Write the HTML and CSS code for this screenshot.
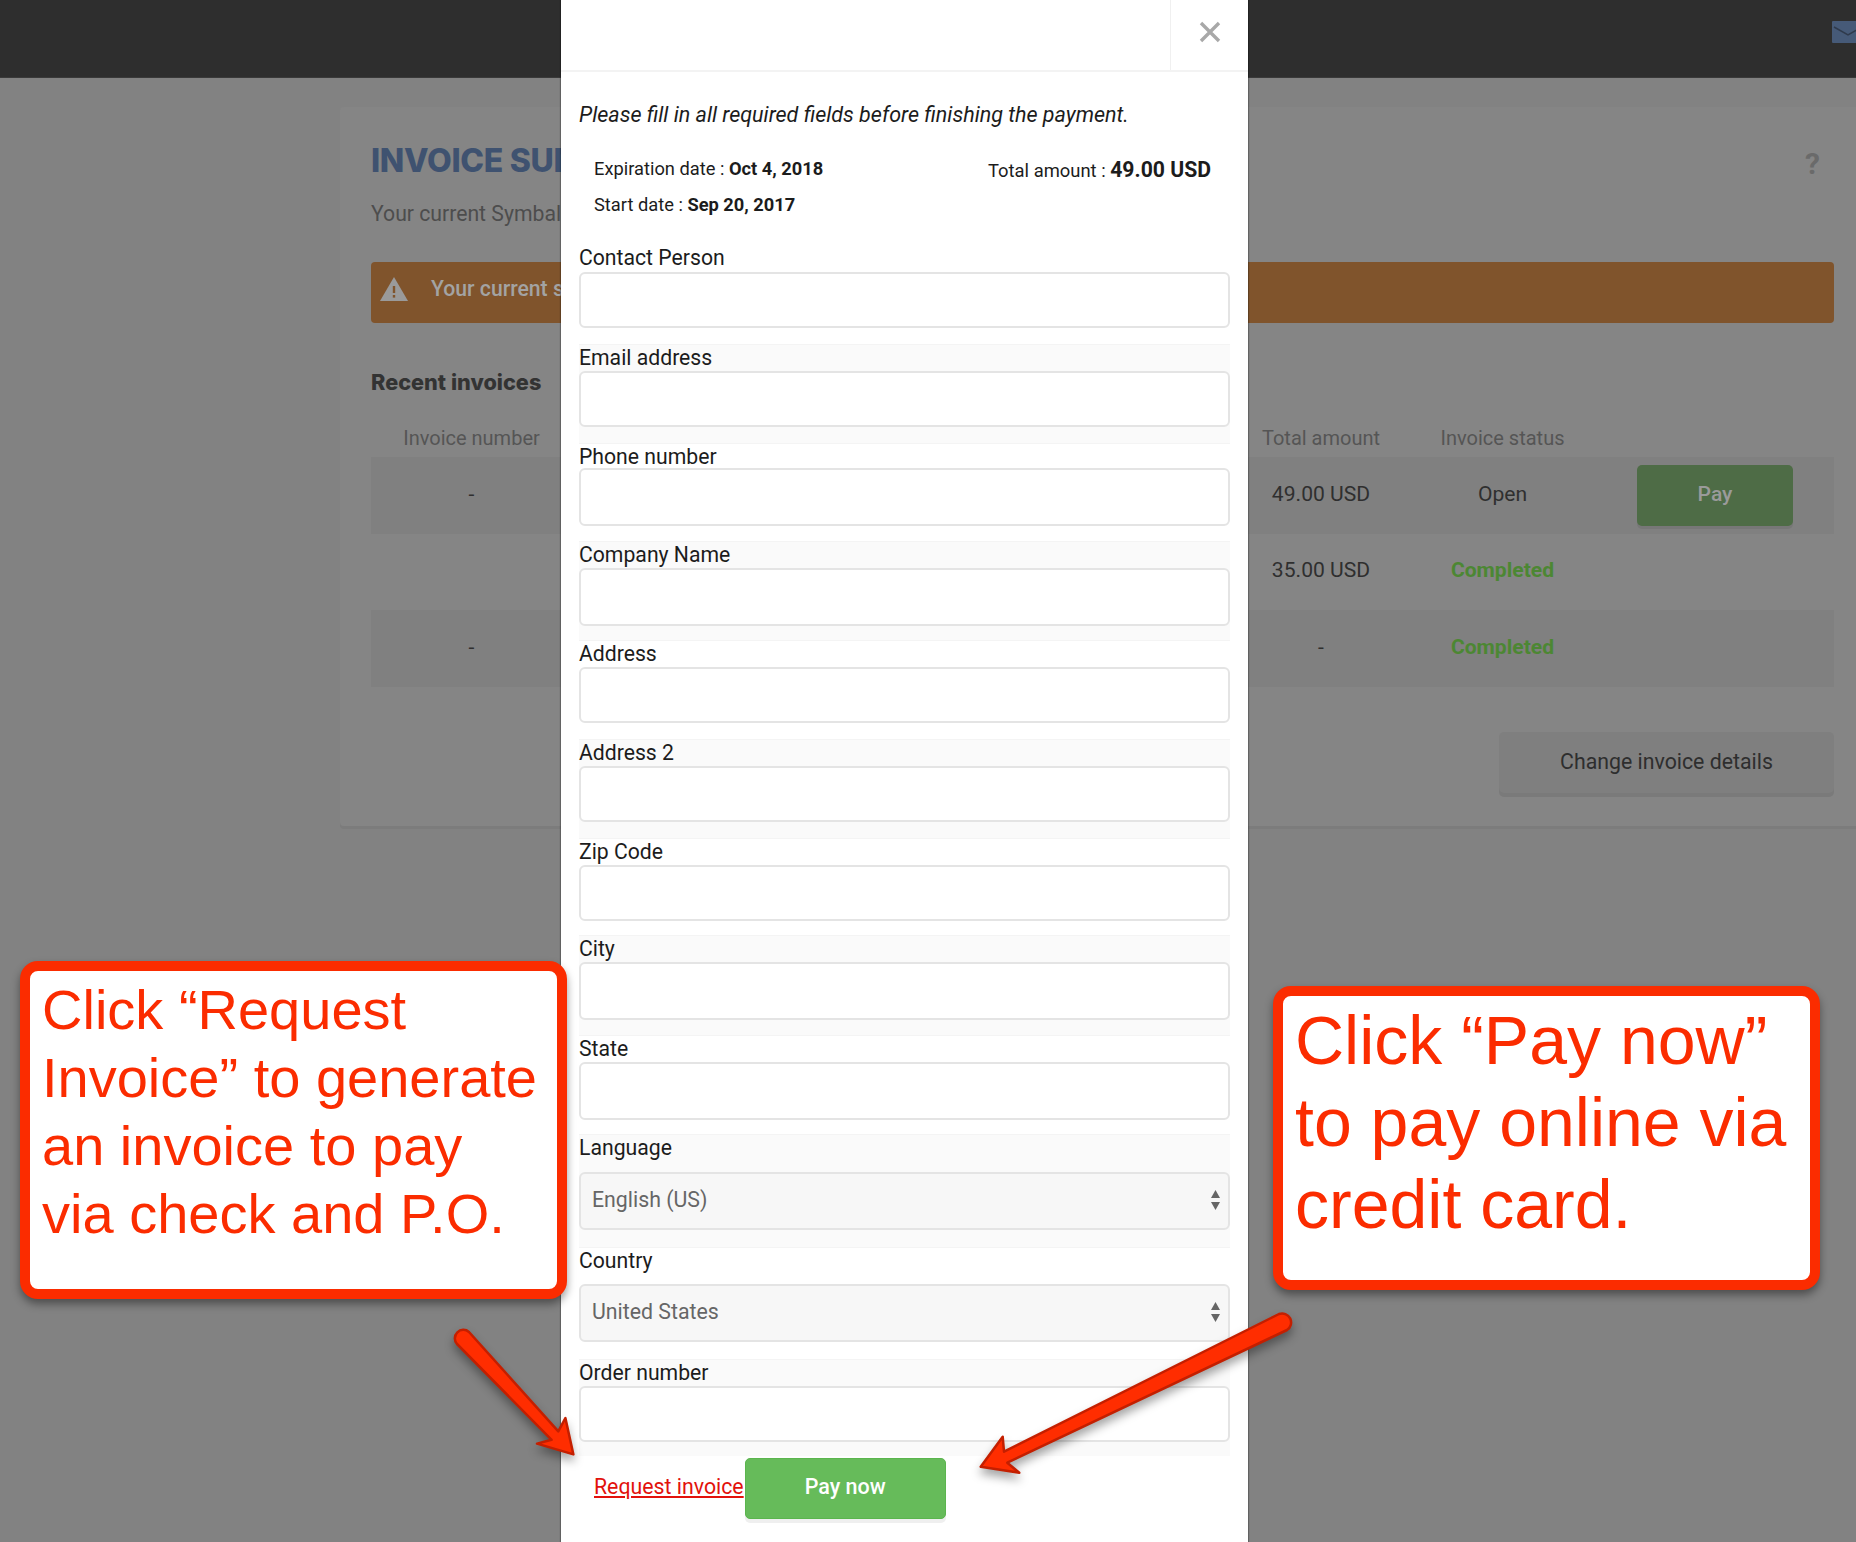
FILE: index.html
```html
<!DOCTYPE html>
<html lang="en">
<head>
<meta charset="utf-8">
<title>Invoice summary</title>
<link rel="stylesheet" href="styles.css">
</head>
<body>
<header class="topbar">
  <svg class="mail" viewBox="0 0 24 22" width="24" height="22"><rect width="30" height="22" rx="1" fill="#465a78"/><path d="M2 6l14 8 14-8" fill="none" stroke="#2f3a4c" stroke-width="1.5"/></svg>
</header>
<main class="panel">
  <div class="panel-head">
    <h1 class="title">INVOICE SUMMARY</h1>
    <span class="help">?</span>
  </div>
  <p class="subtitle">Your current Symbaloo subscription</p>
  <div class="alert">
    <svg class="alert-icon" viewBox="0 0 28 24" width="28" height="24"><path d="M14 0L28 24H0Z" fill="#9a9a9a"/><rect x="12.8" y="9" width="2.4" height="7" fill="#80542c"/><rect x="12.8" y="18" width="2.4" height="2.6" fill="#80542c"/></svg>
    <span class="alert-text">Your current subscription</span>
  </div>
  <h2 class="recent">Recent invoices</h2>
  <div class="table">
    <div class="tr th"><span>Invoice number</span><span></span><span>Total amount</span><span>Invoice status</span><span></span></div>
    <div class="tr zebra"><span>-</span><span></span><span>49.00 USD</span><span>Open</span><span class="action"><button class="pay" type="button">Pay</button></span></div>
    <div class="tr"><span></span><span></span><span>35.00 USD</span><span class="done">Completed</span><span></span></div>
    <div class="tr zebra"><span>-</span><span></span><span>-</span><span class="done">Completed</span><span></span></div>
  </div>
  <div class="panel-foot"><button class="change" type="button">Change invoice details</button></div>
</main>

<section class="modal">
  <div class="modal-head">
    <button class="close" type="button" aria-label="Close"><svg viewBox="0 0 22 22" width="22" height="22"><path d="M2 2l18 18M20 2L2 20" fill="none" stroke="#a8a8a8" stroke-width="3.4"/></svg></button>
  </div>
  <div class="modal-body">
    <p class="intro">Please fill in all required fields before finishing the payment.</p>
    <div class="info">
      <div class="dates">
        <div>Expiration date : <b>Oct 4, 2018</b></div>
        <div>Start date : <b>Sep 20, 2017</b></div>
      </div>
      <div class="total">Total amount : <b>49.00 USD</b></div>
    </div>
    <form class="form">
      <div class="field"><label>Contact Person</label><input class="control" type="text"></div>
      <div class="field"><label>Email address</label><input class="control" type="text"></div>
      <div class="field"><label>Phone number</label><input class="control" type="text"></div>
      <div class="field"><label>Company Name</label><input class="control" type="text"></div>
      <div class="field"><label>Address</label><input class="control" type="text"></div>
      <div class="field"><label>Address 2</label><input class="control" type="text"></div>
      <div class="field"><label>Zip Code</label><input class="control" type="text"></div>
      <div class="field"><label>City</label><input class="control" type="text"></div>
      <div class="field"><label>State</label><input class="control" type="text"></div>
      <div class="field"><label>Language</label>
        <div class="select-wrap"><select class="control"><option>English (US)</option></select>
          <svg class="updown" viewBox="0 0 9 20" width="9" height="20"><path d="M4.5 0L9 8H0ZM0 12H9L4.5 20Z" fill="#666"/></svg></div></div>
      <div class="field"><label>Country</label>
        <div class="select-wrap"><select class="control"><option>United States</option></select>
          <svg class="updown" viewBox="0 0 9 20" width="9" height="20"><path d="M4.5 0L9 8H0ZM0 12H9L4.5 20Z" fill="#666"/></svg></div></div>
      <div class="field"><label>Order number</label><input class="control" type="text"></div>
    </form>
    <div class="modal-foot">
      <a class="request" href="#">Request invoice</a>
      <button class="pay-now" type="button">Pay now</button>
    </div>
  </div>
</section>

<aside class="callout callout-left">Click “Request<br>Invoice” to generate<br>an invoice to pay<br>via check and P.O.</aside>
<aside class="callout callout-right">Click “Pay now”<br>to pay online via<br>credit card.</aside>

<svg class="arrows" viewBox="0 0 1856 1542" width="1856" height="1542">
  <path d="M469 1332 L558.3 1431.4 L565.4 1418 L573.4 1454.4 L537 1443.6 L551.6 1439.8 L457 1344 A8.5 8.5 0 0 1 469 1332Z" fill="#ff2d00" stroke="#c41f00" stroke-width="2.5" stroke-linejoin="round"/>
  <path d="M1279 1314 L1004 1451.7 L1002.7 1436.7 L980.7 1466.7 L1019.3 1472.7 L1007.3 1462.7 L1287 1330 A9 9 0 0 0 1279 1314Z" fill="#ff2d00" stroke="#c41f00" stroke-width="2.5" stroke-linejoin="round"/>
</svg>
</body>
</html>
```
FILE: styles.css
```css
* { box-sizing: border-box; }
html, body { margin: 0; height: 1542px; overflow: hidden; }
body { background: #828282; font-family: Roboto, "Liberation Sans", sans-serif; position: relative; color: #333; }
button { font-family: inherit; }

.topbar { height: 78px; background: #2e2e2e; border-bottom: 1px solid #3a3a3a; display: flex; justify-content: flex-end; align-items: flex-start; padding-top: 21px; overflow: hidden; }
.mail { display: block; margin-right: 0; }

.panel { margin: 29px 0 0 340px; height: 719px; background: #858585; border-radius: 4px 0 0 4px; box-shadow: 0 3px 0 #7c7c7c; padding: 36px 22px 0 31px; }
.panel-head { display: flex; justify-content: space-between; height: 36px; }
.title { margin: 0; font: 800 32px/36px Inter, sans-serif; color: #3f5270; letter-spacing: -.3px; white-space: nowrap; }
.help { font: 700 30px/30px Roboto, sans-serif; color: #6a6a6a; margin-right: 14px; margin-top: 6px; }
.subtitle { margin: 22px 0 0; font-size: 21.2px; line-height: 26px; color: #4d4d4d; white-space: nowrap; }
.alert { margin-top: 35px; height: 61px; background: #80542c; border-radius: 4px; display: flex; align-items: center; padding: 0 0 9px 9px; color: #a3a3a3; font-size: 21.2px; font-weight: 500; }
.alert-icon { margin-right: 23px; margin-top: 1px; }
.alert-text { white-space: nowrap; }
.recent { margin: 45px 0 0; font: 800 21.7px/28px Inter, sans-serif; color: #333; }
.table { margin-top: 29px; }
.tr { display: grid; grid-template-columns: 201px 678px 142px 221px 221px; height: 76.5px; align-items: center; text-align: center; font-size: 21.1px; color: #2f2f2f; padding-bottom: 4px; }
.tr.th { height: 32px; color: #555; font-size: 20px; padding-bottom: 0; align-items: start; line-height: 26px; }
.zebra { background: #808080; }
.done { color: #4c8733; font-weight: 700; }
.action { text-align: left; padding-left: 24px; }
.pay { width: 156px; height: 61px; margin-top: 4px; border: 0; border-radius: 5px; background: #4e6c46; box-shadow: 0 3px 0 #777; color: #9a9a9a; font-size: 21.1px; font-weight: 500; padding: 0 0 4px; }
.panel-foot { display: flex; justify-content: flex-end; margin-top: 45px; }
.change { width: 335px; height: 61px; border: 0; border-radius: 5px; background: #7f7f7f; box-shadow: 0 4px 0 #7a7a7a; color: #2e2e2e; font-size: 21.3px; padding: 0 0 2px; }

.modal { position: absolute; left: 561px; top: 0; width: 687px; height: 1542px; background: #fff; box-shadow: 0 0 1px 1px rgba(0,0,0,.25); }
.modal-head { height: 72px; border-bottom: 2px solid #f3f3f3; display: flex; justify-content: flex-end; }
.close { width: 78px; height: 70px; background: #fff; border: 0; border-left: 1px solid #f0f0f0; display: flex; align-items: center; justify-content: center; padding: 0 0 6px; }
.modal-body { padding: 0 18px; color: #1c1c1c; }
.intro { margin: 30px 0 0; font-size: 21.5px; font-style: italic; line-height: 26px; color: #1c1c1c; }
.info { display: flex; justify-content: space-between; padding: 0 19px 0 15px; margin-top: 23px; font-size: 18.3px; height: 92.5px; }
.dates div { line-height: 36px; }
.dates b, .total b { font-weight: 700; }
.total { line-height: 36px; padding-top: 1px; font-size: 18.4px; }
.total b { font-size: 21.2px; }

.form { display: flex; flex-direction: column; margin-top: 0; }
.field { height: 99px; box-shadow: inset 0 1px #f4f4f4; }
.field:first-child { height: 100px; box-shadow: none; }
.field:nth-child(even) { background: #fafafa; }
.field:nth-child(3) { height: 98px; }
.field:nth-child(7), .field:nth-child(12) { height: 97px; }
.field:nth-child(8) { height: 100px; }
.field:nth-child(10) { height: 113px; }
.field:nth-child(11) { height: 112px; }
.field label { display: block; height: 27px; font-size: 21.2px; line-height: 27px; color: #1c1c1c; }
.field:first-child label { height: 28px; }
.field:nth-child(3) label { height: 25px; }
.field:nth-child(10) label { height: 38px; }
.field:nth-child(11) label { height: 37px; }
.control { display: block; width: 100%; height: 56px; margin: 0; background: #fff; border: 2px solid #e4e4e4; border-radius: 6px; font: 21.3px Roboto, sans-serif; outline: 0; }
.field:nth-child(3) .control, .field:nth-child(4) .control, .field:nth-child(8) .control, .field:nth-child(9) .control, .select-wrap .control { height: 58px; }
.select-wrap { position: relative; }
select.control { appearance: none; -webkit-appearance: none; background: #f7f7f7; color: #666; padding: 0 0 2px 11px; }
.updown { position: absolute; right: 10px; top: 18px; }

.modal-foot { display: flex; align-items: flex-start; padding: 2.5px 0 0 15px; }
.request { color: #e2120c; font-size: 21.3px; line-height: 58px; white-space: nowrap; }
.pay-now { width: 201px; height: 61px; margin-left: 1px; background: #66bb5a; border: 1px solid #5bb54e; border-radius: 5px; box-shadow: 0 4px 0 #efefef; color: #fff; font-size: 21.5px; font-weight: 500; padding: 0 0 4px; }

.callout { position: absolute; background: #fff; border: 10px solid #fb2c00; border-radius: 18px; color: #fb2c00; font-family: "Liberation Sans", Arial, sans-serif; box-shadow: 0 5px 9px rgba(0,0,0,.4); white-space: nowrap; }
.callout-left { left: 20px; top: 961px; width: 547px; height: 338px; padding: 4.5px 0 0 12px; font-size: 56px; line-height: 68px; }
.callout-right { left: 1273px; top: 986px; width: 547px; height: 304px; padding: 2.5px 0 0 12px; font-size: 68px; line-height: 82px; }

.arrows { position: absolute; left: 0; top: 0; pointer-events: none; filter: drop-shadow(0 6px 5px rgba(0,0,0,.35)); }
```
